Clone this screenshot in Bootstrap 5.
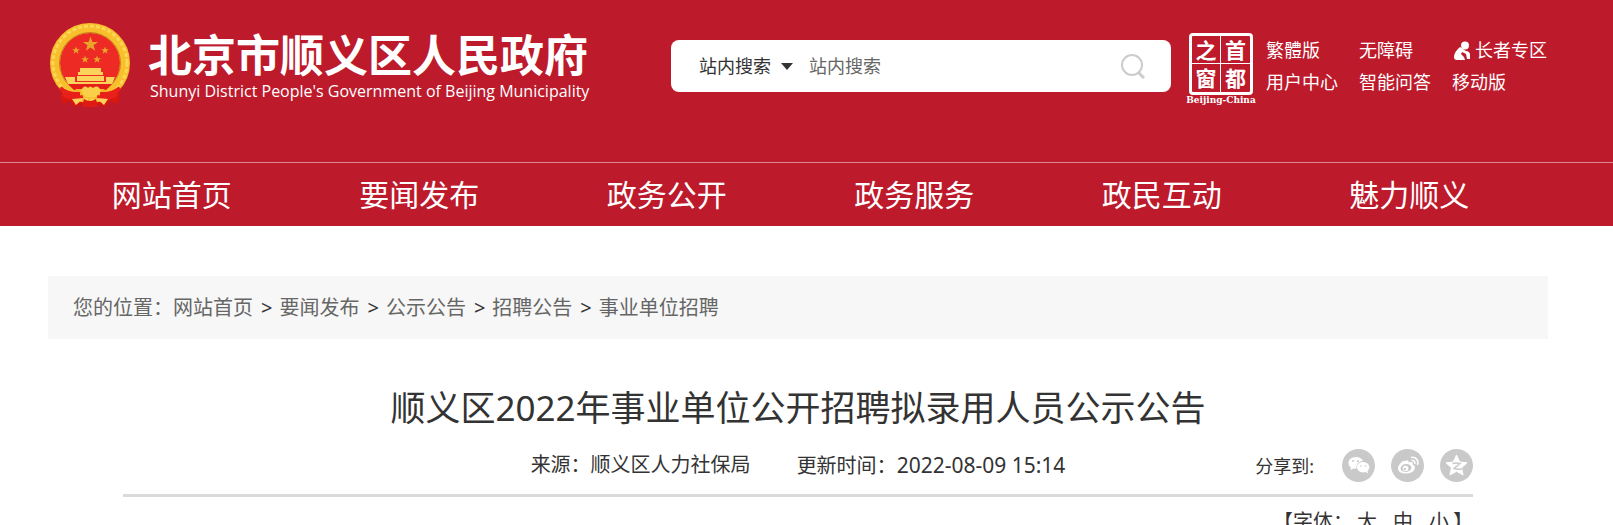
<!DOCTYPE html>
<html lang="zh-CN">
<head>
<meta charset="utf-8">
<meta name="viewport" content="width=device-width, initial-scale=1">
<title>顺义区2022年事业单位公开招聘拟录用人员公示公告</title>
<link href="https://cdn.jsdelivr.net/npm/bootstrap@5.3.0/dist/css/bootstrap.min.css" rel="stylesheet">
<style>
body{font-family:"Noto Sans","Noto Sans CJK SC",sans-serif;color:#333;background:#fff;overflow-x:hidden}
a{color:inherit;text-decoration:none}
.page-wrap{padding-left:48px;padding-right:65px}
.site-head{background:#bd1a2c;color:#fff}
.head-top{height:162px}
.emblem{width:84px;height:88px;margin-top:22px}
.brand{margin:26px 0 0 16px;width:442px}
.brand-cn{font:700 44px/55px "Noto Sans CJK SC",sans-serif;white-space:nowrap}
.brand-en{font-family:"Open Sans",sans-serif;font-size:16px;line-height:20px;white-space:nowrap;padding-left:2px}
.search-box{width:500px;height:52px;margin:40px 0 0 81px;background:#fff;border-radius:8px;font-size:18px}
.search-kind{appearance:none;border:0;background:none;color:#333;width:110px;padding:0;outline:0}
.kind-wrap{position:relative;margin-left:28px}
.kind-wrap svg{position:absolute;right:0;top:10px;pointer-events:none}
.search-text{border:0;outline:0;background:none;padding:0;width:250px;font-size:18px}
.search-text::placeholder{color:#666;opacity:1}
.search-go{border:0;background:none;padding:0;margin-right:26px;line-height:0}
.seal{width:72px;margin:33px 0 0 14px}
.seal-box{width:64px;height:62px;border:3px solid #fff;border-radius:4px;display:grid;grid-template-columns:1fr 1fr;font:700 21px/27px "Noto Sans CJK SC",sans-serif;text-align:center}
.seal-box span{height:28px}
.seal-box span:nth-child(odd){border-right:1px solid #fff}
.seal-box span:nth-child(-n+2){border-bottom:1px solid #fff}
.seal-en{font:700 11px/10px "DejaVu Serif","Liberation Serif",serif;font-size:9px}
.quick{display:grid;grid-template-columns:93px 93px auto;font-size:18px;line-height:32px;margin:34px 0 0 9px;white-space:nowrap}
.main-nav{border-top:1px solid #dc8890;height:64px}
.main-nav ul{width:99%}
.main-nav a{font-size:30px;line-height:64px;white-space:nowrap}
.crumbs{background:#f7f7f7;margin-top:50px;padding:0 25px;height:63px;font-size:20px;line-height:63px;color:#666}
.crumbs .sep{color:#333;padding:0 7px 0 8px}
.article{width:90%;margin:0 auto}
.article h1{font-size:35px;line-height:50px;font-weight:400;margin:44px 0 0;text-align:center}
.meta{font-size:20px;line-height:32px;margin-top:16px;padding-bottom:12px;border-bottom:3px solid #dadada}
.meta-items{gap:46px}
.meta time{font-size:21px}
.share{font-size:18px}
.font-size{font-size:20px;line-height:30px;padding-top:10px;white-space:nowrap}
.font-size button{border:0;background:none;padding:0;color:inherit}
</style>
</head>
<body>
<header class="site-head">
  <div class="page-wrap head-top d-flex align-items-start">
    <svg class="emblem flex-shrink-0" viewBox="0 0 84 88" aria-hidden="true">
      <path d="M17 62Q10 72 15 82L22 79 26 85 42 79 57 85 62 79 68 82Q75 74 68 62Z" fill="#d8170f"/>
      <circle cx="42" cy="41" r="35" fill="#ee2a24" stroke="#f7bf2c" stroke-width="10"/>
      <circle cx="42" cy="41" r="37" fill="none" stroke="#fbd754" stroke-width="3" stroke-dasharray="4 2"/>
      <circle cx="42" cy="41" r="30.500" fill="none" stroke="#c98218" stroke-width="1"/>
      <path d="M42.500 14.500l1.900 5.400h5.700l-4.600 3.400 1.700 5.500-4.700-3.300-4.700 3.300 1.700-5.500-4.600-3.400h5.700z" fill="#e9a52a"/>
      <g fill="#e9a52a">
        <path id="s1" d="M28 24.500l1 2.700h2.900l-2.300 1.700.9 2.800-2.500-1.700-2.400 1.700.9-2.800-2.300-1.700h2.800z"/>
        <use href="#s1" x="29"/><use href="#s1" x="9" y="9"/><use href="#s1" x="21" y="9"/>
      </g>
      <path d="M32 46h21v4h2v3H30v-3h2zM29 54h27v5H29zM17 55h10v5h31v-5h9l-3 7H20z" fill="#fbd35a"/>
      <path d="M20 62h44l-6 6H26z" fill="#e61e19"/>
      <path d="M27 67h30l-5 5H32z" fill="#f4b728"/>
      <path d="M33 69q3-7 7-3 2-3 5 0 5-4 8 3l-5 6H37z" fill="#fbcf48"/>
      <path d="M12 66q8 7 20 6M72 66q-8 7-20 6M15 72q9 6 20 3M69 72q-9 6-20 3" fill="none" stroke="#e8201a" stroke-width="4"/>
      <path d="M24 77l12-1-8 7zM60 77l-12-1 8 7z" fill="#fbd35a"/>
      <path d="M36 77q6 4 12 0l2 8H34z" fill="#dd1b14"/>
    </svg>
    <a href="#" class="brand flex-shrink-0">
      <div class="brand-cn">北京市顺义区人民政府</div>
      <div class="brand-en">Shunyi District People's Government of Beijing Municipality</div>
    </a>
    <form class="search-box d-flex align-items-center flex-shrink-0">
      <div class="kind-wrap flex-shrink-0">
        <select class="search-kind" aria-label="搜索范围"><option>站内搜索</option></select>
        <svg width="28" height="7" viewBox="0 0 28 7"><path d="M0 0h12L6 7z" fill="#333"/></svg>
      </div>
      <input class="search-text me-auto" type="text" placeholder="站内搜索" aria-label="站内搜索">
      <button class="search-go" type="button" aria-label="搜索"><svg width="26" height="26" viewBox="0 0 26 26" fill="none" stroke="#ccc" stroke-width="2"><circle cx="13" cy="12" r="10"/><path d="M19 19l6 6" stroke-width="3"/></svg></button>
    </form>
    <a href="#" class="seal flex-shrink-0 d-flex flex-column align-items-center">
      <span class="seal-box"><span>之</span><span>首</span><span>窗</span><span>都</span></span>
      <span class="seal-en">Beijing-China</span>
    </a>
    <nav class="quick" aria-label="快捷入口">
      <a href="#">繁體版</a><a href="#">无障碍</a>
      <a href="#" class="d-flex align-items-center"><svg class="me-1" width="19" height="19" viewBox="0 0 19 19" fill="#fff"><circle cx="13" cy="4.500" r="4"/><path d="M8 6C4 9 2 13 2 16q0 3 3 3h8l-1-3-3-3 1-2 4 2 1 5h3v-5q-1-3-4-3l-3-2z"/></svg>长者专区</a>
      <a href="#">用户中心</a><a href="#">智能问答</a><a href="#">移动版</a>
    </nav>
  </div>
  <nav class="main-nav" aria-label="主导航">
    <div class="page-wrap">
      <ul class="row g-0 list-unstyled mb-0 text-center">
        <li class="col-2"><a href="#">网站首页</a></li>
        <li class="col-2"><a href="#">要闻发布</a></li>
        <li class="col-2"><a href="#">政务公开</a></li>
        <li class="col-2"><a href="#">政务服务</a></li>
        <li class="col-2"><a href="#">政民互动</a></li>
        <li class="col-2"><a href="#">魅力顺义</a></li>
      </ul>
    </div>
  </nav>
</header>
<main class="page-wrap">
  <nav class="crumbs d-flex" aria-label="您的位置">
    <span>您的位置：</span><a href="#">网站首页</a><span class="sep">&gt;</span><a href="#">要闻发布</a><span class="sep">&gt;</span><a href="#">公示公告</a><span class="sep">&gt;</span><a href="#">招聘公告</a><span class="sep">&gt;</span><a href="#">事业单位招聘</a>
  </nav>
  <article class="article">
    <h1>顺义区2022年事业单位公开招聘拟录用人员公示公告</h1>
    <div class="meta row g-0 align-items-center">
      <div class="col"></div>
      <div class="col-auto d-flex meta-items">
        <span>来源：顺义区人力社保局</span><span>更新时间：<time datetime="2022-08-09T15:14">2022-08-09 15:14</time></span>
      </div>
      <div class="col share d-flex align-items-center justify-content-end gap-3">
        <span class="me-2 pe-1">分享到:</span>
        <a href="#" class="d-flex" aria-label="微信"><svg width="33" height="33" viewBox="0 0 33 33"><circle cx="16.500" cy="16.500" r="16.500" fill="#c9c9c9"/><g fill="#fff"><path d="M14 8C9 8 6.500 11 6.500 14c0 2 1 3.500 2.500 4.500L8.500 21l3-1.500 3 .3C14 15 17 12 21 12 20 9.500 17 8 14 8z"/><path d="M21 13c-3.500 0-6 2.300-6 5s2.500 5.500 6 5.500l2.500-.5 2.500 1.500-.5-2.500c1-1 1.800-2.300 1.800-4 0-2.700-3-5-6.300-5z"/></g><g fill="#c9c9c9"><circle cx="11" cy="12" r="1"/><circle cx="16" cy="12" r="1"/><circle cx="19" cy="17" r=".8"/><circle cx="23.500" cy="17" r=".8"/></g></svg></a>
        <a href="#" class="d-flex" aria-label="微博"><svg width="33" height="33" viewBox="0 0 33 33"><circle cx="16.500" cy="16.500" r="16.500" fill="#c9c9c9"/><path d="M14 12c2-1.500 4-1 3.500 1.500 3-1 5-.5 4 2 5 2 2 9-6.500 9-5 0-8-2-8-5 0-3.500 5-9 7-7.500z" fill="#fff"/><ellipse cx="15" cy="19" rx="5.500" ry="4" fill="#c9c9c9" transform="rotate(-8 15 19)"/><circle cx="14.500" cy="19.500" r="2.800" fill="#fff"/><circle cx="13.800" cy="20" r="1.200" fill="#c9c9c9"/><path d="M20 8.500c5-1 8 3 6.500 7.500M20.500 11.500c2.500-.5 4 1.500 3.300 3.500" fill="none" stroke="#fff" stroke-width="1.500"/></svg></a>
        <a href="#" class="d-flex" aria-label="QQ空间"><svg width="33" height="33" viewBox="0 0 33 33"><circle cx="16.500" cy="16.500" r="16.500" fill="#c9c9c9"/><path d="M16.500 6l3.200 7 7.300.8-5.500 5 1.600 7.200-6.600-3.700L9.900 26l1.600-7.200-5.500-5 7.300-.8z" fill="#fff" stroke="#fff" stroke-linejoin="round"/><path d="M12.500 14.500q4-1 7.500 0l-6 5q4 1.200 8 .5" fill="none" stroke="#c9c9c9" stroke-width="1.500"/></svg></a>
      </div>
    </div>
    <div class="font-size d-flex justify-content-end">
      <span>【字体：</span><button type="button" class="ms-1 me-3">大</button><button type="button" class="me-3">中</button><button type="button" class="me-1">小</button><span>】</span>
    </div>
  </article>
</main>
<script src="https://cdn.jsdelivr.net/npm/bootstrap@5.3.0/dist/js/bootstrap.bundle.min.js"></script>
</body>
</html>
